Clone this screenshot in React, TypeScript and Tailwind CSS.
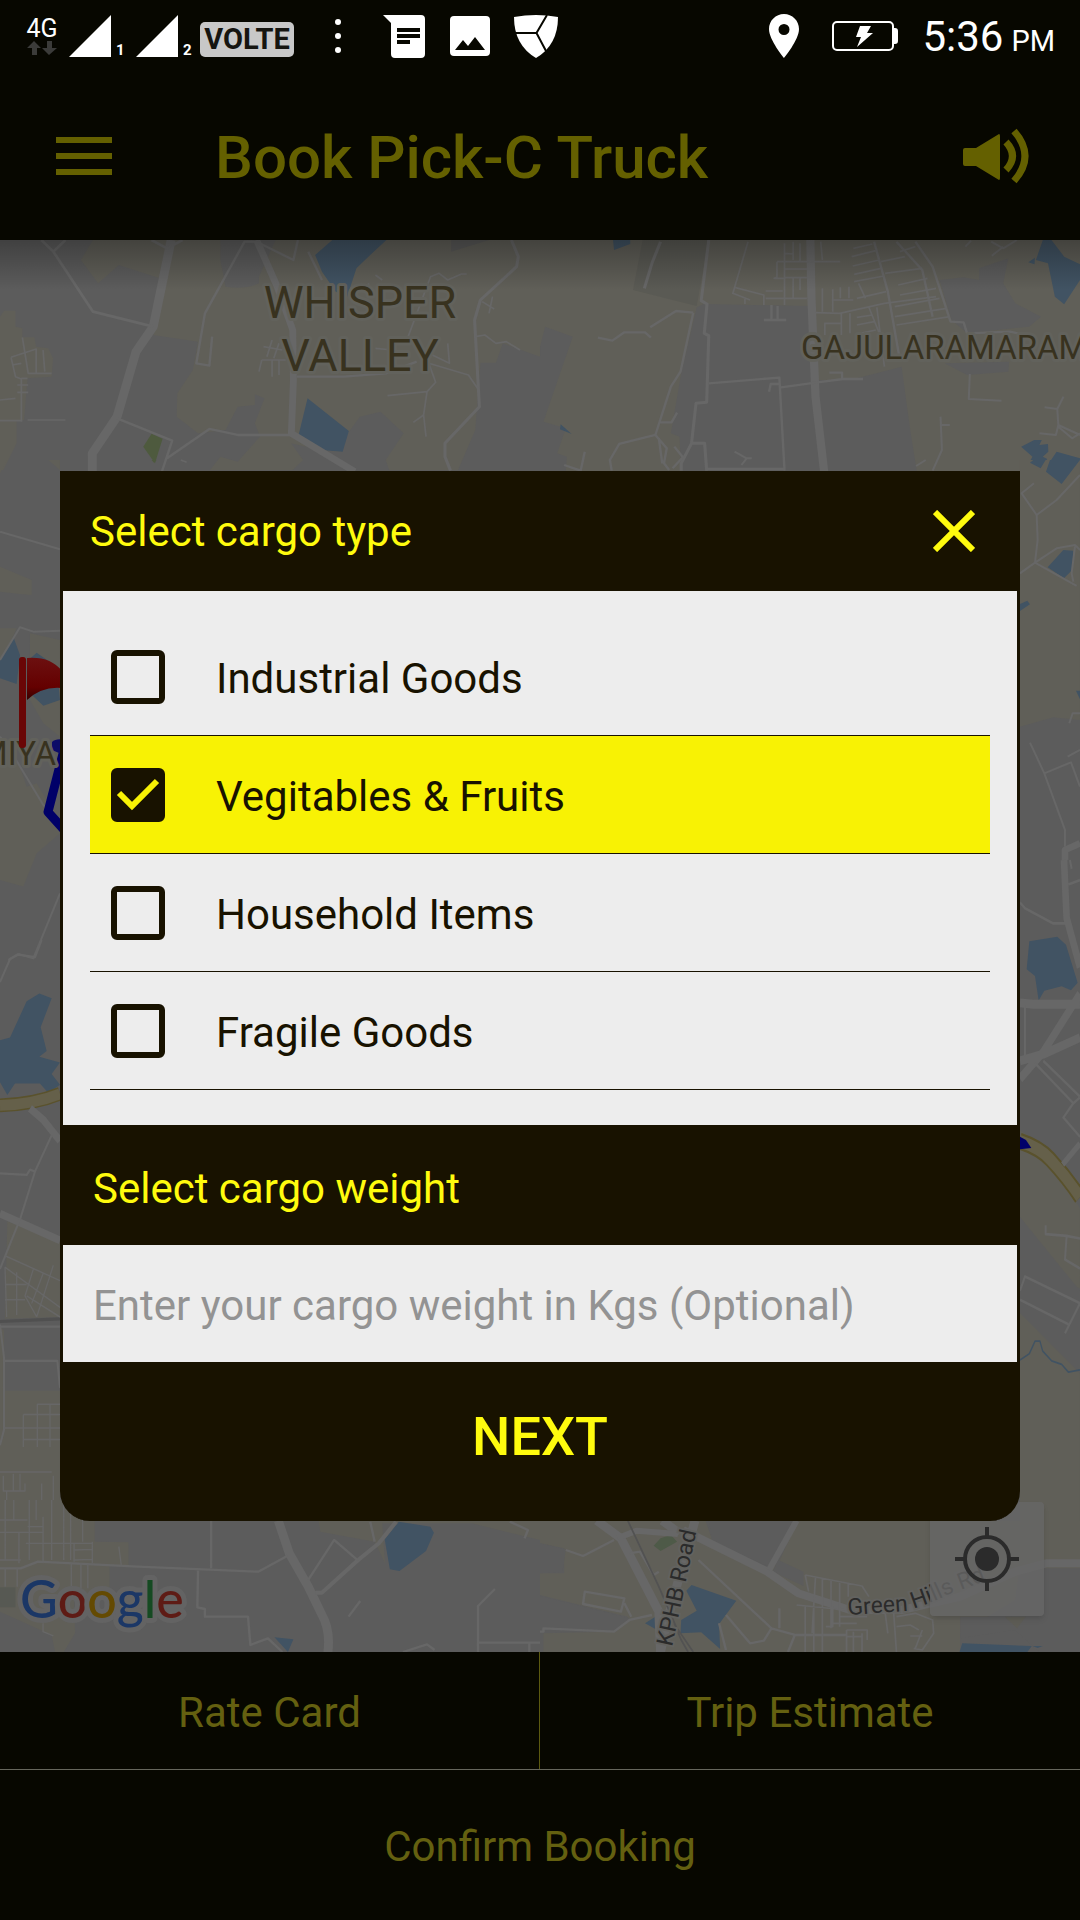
import { useState, type ReactNode } from "react";

const CARGO_TYPES = ["Industrial Goods", "Vegitables & Fruits", "Household Items", "Fragile Goods"];

const LAND = "#5c5c5c";
const URBAN = "#605f58";
const WATER = "#415363";
const ROAD = "#676767";

/* One tile of the map, drawn in its own units and placed on the canvas. */
function Tile({ x, y, sx, sy, children }: { x: number; y: number; sx: number; sy: number; children: ReactNode }) {
  return <g transform={`translate(${x} ${y}) scale(${sx} ${sy})`}>{children}</g>;
}

function Roads({ d, w = 6, color = ROAD }: { d: string; w?: number; color?: string }) {
  return <path d={d} fill="none" stroke={color} strokeWidth={w} strokeLinejoin="round" />;
}

function NorthWest() {
  return (
    <Tile x={0} y={230} sx={0.3444} sy={0.3333}>
      <path
        fill={URBAN}
        d="M270 30H640V90L655 170Q710 180 752 160V140L800 30H1568V380L1460 340L1440 398H1395L1380 600L1330 720H1130L1120 690L1172 610L1105 545L1045 560L1010 610L990 665L940 662L845 640L880 690L850 720H610L640 680L690 695L755 620L740 580L768 505L740 493V525L690 530L655 600L575 610L513 560L515 490L560 420L575 335L445 315L480 150L345 105L285 160L235 90Z"
      />
      <path fill={URBAN} d="M0 260L12 242H45V290L65 295V322H100L105 350L140 355L154 385L150 440L80 445L70 570H48V640L10 720H0Z" />
      <path fill="#595958" d="M1310 30H1420L1310 65Z" />
      <path fill={WATER} d="M965 30H1122L1075 75L1035 115L1008 200L975 185L935 125L915 75Z" />
      <path fill={WATER} d="M893 505L1013 603L995 665L940 661L867 615Z" />
      <path fill="#4e5a3e" d="M440 611L472 626L450 700L416 650Z" />
      <Roads w={26} d="M497 30L445 290L395 365L340 560L268 670V730" />
      <Roads w={20} d="M745 30L805 170L850 300L852 450L846 610L1030 725" />
      <Roads w={8} d="M120 30L155 65L270 245L445 290M155 65L190 30M440 30L485 55L530 30" />
      <Roads w={7} d="M740 35H710L595 250L570 400L608 407L616 320M745 35L852 90L865 30M895 65L935 150M340 565L500 632L470 725M485 685L608 597L690 615H845M862 440H1000L1120 430L1210 395" />
      <Roads w={9} d="M1485 30L1505 80L1500 110L1395 210L1378 270L1392 530L1292 640V680L1308 722" />
      <Roads w={5} d="M1380 320L1408 315L1440 340L1470 335L1510 360M1400 215L1435 237M1430 200L1420 250M1185 320L1250 140L1275 130L1300 150L1340 132H1355M1245 400L1360 435L1390 480M1245 400L1265 457L1240 485L1125 497M1240 485L1230 555L1237 620M1230 555L1200 577M1090 355L1140 360M1300 340L1305 400L1245 370" />
      <Roads w={5} d="M65 322L82 430H150M32 382L105 357V430M32 382L45 440L62 447V575M62 400L35 405M62 445H80M125 360L130 425M50 465H82M50 487H82M0 510L45 505M0 572H65M80 570H190M790 330L775 380M810 340L795 385M760 390H830M760 390L752 425M790 390V440M810 390V435M765 350L820 360M525 690L542 697M1090 135L1110 150M1070 160V190" />
    </Tile>
  );
}

function NorthEast() {
  return (
    <Tile x={540} y={230} sx={0.3444} sy={0.3333}>
      <path fill={URBAN} d="M0 30H1568V730H1095L1075 600L1050 410L900 450H790L780 228L475 222L455 232L410 430L380 610L405 620L410 725H75L78 680L50 670L75 595L10 575L95 320L15 290L0 350Z" />
      <path fill="#5a5a54" d="M298 30H490L455 228L270 180Z" />
      <path fill={LAND} d="M1160 150L1230 142L1275 150V115L1360 85L1345 160L1380 220L1455 260L1420 290L1240 310L1195 270ZM1175 400L1240 435L1360 425L1362 395Z" />
      <path fill={WATER} d="M212 30H262V42L215 60ZM1460 30H1485L1522 80L1568 103V150L1522 223L1495 200L1475 100L1440 90ZM1418 97L1437 83L1436 103Z" />
      <path fill={WATER} d="M60 583L92 612L58 598ZM1397 650L1435 630H1457L1450 645L1475 642L1476 665L1460 680L1473 687L1453 714L1420 698L1430 680ZM1500 665L1568 685V730L1525 750L1468 715Z" />
      <Roads w={24} d="M785 30L788 200L800 500L825 725" />
      <Roads w={9} d="M490 30L468 212L485 222L477 310L490 317L484 517L453 520L440 640L410 700V722M440 640H478L484 722M350 35L325 100L303 175" />
      <Roads w={7} d="M445 248L395 243L320 292M445 248L408 425L380 470L335 615L230 642L203 690L208 722M335 615L368 655L360 700L375 720M350 577H382L398 548M345 625L355 700M390 650L415 682L385 715M130 665L118 722L70 705M168 323L210 332L245 307H305L322 323M490 460L695 443L710 722M700 472L800 458L880 447H938M665 485L670 462H695M840 428H877V450M650 270H715M672 225V270M690 228V270M480 717H710" />
      <Roads w={5} d="M604 35L560 190L610 210M565 172L650 195V225M595 205V222M688 95H872M688 95V142L680 145H710V225M710 40V180M710 117H775M710 143H775M735 145V205M755 145V180M655 183H705M655 205H775M735 35V90M755 40V92M815 35L820 90M712 70L735 72" />
      <Roads w={7} d="M970 35L1010 185L1045 390M1035 35L1110 120L1140 260M1090 35L1140 110L1192 275L1230 277L1240 310L1365 305L1410 315" />
      <Roads w={5} d="M910 55L965 42M905 80L975 62M908 108L985 90M912 133L990 115M912 155L998 138M1045 65L1090 50M990 95L1060 80M1002 130L1110 115M1040 165L1125 145M1045 195L1150 175M1030 230L1160 205M1030 260L1180 235M1035 285L1190 260M800 248L870 250L1000 220L1150 200M920 205L1005 185M848 210H910M850 178V245M820 175V245M872 172V205M897 170V205M925 160L945 205M875 250V315M900 250V310M825 280H875M827 280V315M920 262L965 255M920 285L970 275M930 310L975 300M955 232L985 310M978 232L1000 410" />
      <Roads w={6} d="M1163 560L1167 660L1140 722M1167 585H1190M1092 708L1120 690M1248 432L1245 507L1340 512M1465 532L1502 537L1505 585L1568 615M1520 500L1502 537M1505 585L1498 615L1450 610M1505 590L1545 625L1568 610M1235 50L1252 32M1310 35L1345 55L1385 30M1345 50L1312 77M565 665L600 685L585 705M600 685H615" />
    </Tile>
  );
}

function WestSide() {
  return (
    <>
      <Tile x={0} y={460} sx={0.3333} sy={0.3333}>
        <path fill={URBAN} d="M0 0H20L0 40ZM145 0H180V30ZM0 320L95 360V405L60 402L0 395ZM0 505H50L30 550L0 600ZM90 520L180 540V830L130 790L90 720ZM0 850L60 920L80 980L110 970L140 1020L180 1080V1120L110 1180L70 1280L0 1260Z" />
        <path fill={WATER} d="M0 600L40 530L60 585L50 672L0 655ZM85 600L110 578L170 620L180 720L130 737L90 700Z" />
        <path fill="#4e5a3e" d="M455 0H470L462 8Z" />
        <Roads w={22} d="M278 0V34" />
        <Roads d="M0 215L180 268M0 600L60 502L100 515L180 512M0 830L30 870L130 1035L180 1100M180 1300L100 1495L55 1482L25 1500" />
      </Tile>
      <Tile x={0} y={940} sx={0.3333} sy={0.3827}>
        <path fill={URBAN} d="M22 735L180 790V985L15 990ZM0 1010L12 1020V1100H175L180 1178V1568H0Z" />
        <path fill={LAND} d="M12 1100H170L180 1178H12Z" />
        <path fill={WATER} d="M0 262L30 255L80 160L118 140L155 152L122 228L140 290L118 305L180 320L155 350L180 378L145 400L120 375L45 375L22 405L0 372Z" />
        <Roads w={36} color="#5a522c" d="M0 432Q100 430 180 402" />
        <Roads w={28} color="#65604a" d="M0 432Q100 430 180 402" />
        <Roads w={20} d="M90 440L130 470L180 525M0 715L180 785" />
        <Roads d="M0 110L30 50L55 38L105 45L125 0M155 510L105 605L62 725L0 860M0 610L80 614L90 600L105 605M0 1005L12 1090V1280L0 1320M12 1100H172L180 1170M180 1010H0" />
        <Roads w={8} color="#505050" d="M0 997L180 990" />
        <Roads w={4} d="M15 825L180 890M15 855L180 960M15 855L20 985M50 868V980M100 860L75 930L110 985M130 870L95 950M160 850L110 985M15 900H80M15 940H75M80 930L180 985M180 1213H112V1325M150 1213V1325M70 1240H180M70 1240V1325M12 1275H180M70 1305H180M0 1390H155M10 1400V1440H75V1420M40 1395V1440M60 1395V1440M160 1400V1470M125 1420V1568M0 1470H90M20 1440V1568M45 1470V1568M65 1470V1568M90 1465V1568M110 1465V1568M140 1465V1568M90 1470H180M80 1535H180M180 1490H130" />
      </Tile>
    </>
  );
}

function EastSide() {
  return (
    <>
      <Tile x={780} y={460} sx={0.3333} sy={0.3333}>
        <path fill={URBAN} d="M720 0H900V780L820 772L720 800Z" />
        <path fill={WATER} d="M760 0H797L782 25L750 8ZM810 0H900L845 72L798 35ZM850 270L880 272L877 330L852 355L803 322ZM720 432L742 422L750 433L720 453ZM888 692H900V718Z" />
        <Roads d="M900 45L830 120L770 165L725 100L762 70M770 165L773 240L765 308L720 340M765 308L830 265L885 255L900 270M765 308L890 378M880 365L875 340L885 260M750 848L793 940L855 1110V1160M793 940L873 907L900 980M863 890L900 870M868 790L878 760H900" />
        <Roads w={20} d="M900 1150L855 1170V1200" />
      </Tile>
      <Tile x={900} y={860} sx={0.3333} sy={0.4464}>
        <path fill={URBAN} d="M360 605L430 640L540 780V960L510 950L480 930L360 800ZM360 1015L460 1075L430 1085L360 1125V1100ZM360 1120L400 1080H470L540 1150V1568H360Z" />
        <path fill={LAND} d="M360 800L540 965V1150L360 1015Z" />
        <path fill={WATER} d="M388 182L472 172L498 190L533 275L513 292L485 283L433 293L416 315L405 260L380 245Z" />
        <Roads w={20} d="M492 0L500 130L540 240M360 320L400 323H540M360 490L430 430L540 300M360 450L430 435L540 398" />
        <Roads d="M360 95L375 108L460 142H495M375 325V440M405 455L520 545L540 532M430 450L540 530M520 545L490 577L540 620M510 0L515 20M505 55L540 45M360 965L375 933L540 993L495 1060M360 985L505 1040M437 818V838L500 842L540 848M500 842L495 895L540 915" />
        <Roads w={38} color="#5a522c" d="M360 630Q420 645 450 670Q500 710 540 755" />
        <Roads w={28} color="#65604a" d="M360 630Q420 645 450 670Q500 710 540 755" />
        <Roads w={14} d="M488 682L540 635" />
        <Roads w={4} color={WATER} d="M360 1120L388 1106L405 1078H420L428 1100L455 1122L485 1130L505 1147L540 1142" />
        <path fill="#00006a" d="M360 620L378 627L394 645L360 648Z" />
      </Tile>
    </>
  );
}

function South() {
  return (
    <>
      <Tile x={0} y={1500} sx={0.3444} sy={0.3333}>
        <path fill={URBAN} d="M0 0H275V125L373 127V195H318V262L215 300L218 400L185 456H160L150 405L0 335ZM925 60H1568V120L1370 70H1110L1118 190L1088 125L930 95Z" />
        <path fill="#575953" d="M0 262H45V322H0Z" />
        <path fill={WATER} d="M1158 65L1250 80L1260 98L1237 153L1160 213L1132 208L1117 118ZM797 412L852 418L836 456Z" />
        <Roads w={26} d="M808 62L840 160L895 260L935 345Q960 390 952 458" />
        <Roads w={12} d="M1150 65L1100 130L1040 180L935 278H915" />
        <Roads w={7} d="M0 205H60L110 185L400 200L750 215L835 167M613 62V205M575 212L573 322L595 327V350H720L727 435L778 415L820 456M895 240L970 120L1040 182M1012 350L1046 303M1437 267L1388 318V456M1390 428H1568M1537 428V456M1170 456L1240 433L1262 450M1075 65L1088 125M1480 65L1533 90L1523 115" />
        <Roads w={4} d="M0 60H80M0 97H125M15 0V180M40 0V60M55 97V190M85 0V180M105 0V60M125 50V190M80 80H125M75 130H270M150 0V180M185 0V180M205 0V180M240 0V125M215 130V185M215 150L268 148M215 180L268 178M268 125V190M345 140L352 195M0 180H60M15 205V260M50 205V260M207 190V270M235 190V265M255 190V265M125 370V395L155 408" />
      </Tile>
      <Tile x={540} y={1500} sx={0.3444} sy={0.3333}>
        <path fill={URBAN} d="M0 60H480L510 150L660 215L700 180L770 225L765 255L680 215L750 62H1568V215L1440 205L1390 225L1380 300L1220 400V456H10V400L200 395L255 365V350L0 285V220H70V145L0 130Z" />
        <path fill={LAND} d="M0 130L75 148L65 215L0 220ZM0 288L260 355L220 395L0 388ZM490 62H750L665 200L500 125ZM692 180L765 215V258L675 215ZM1440 205H1568V456H1450L1380 390L1220 415V350H1370Z" />
        <path fill="#4e5a48" d="M330 137L350 115L380 105L398 125L350 153Z" />
        <path fill={WATER} d="M440 255L570 302L520 372L523 447L468 397L408 400L410 360L455 332L425 272ZM305 370L335 350V387ZM1226 430L1428 438L1415 456H1218ZM1430 438H1460L1445 444Z" />
        <Roads w={26} d="M165 62L235 115L345 335L350 456M355 62L405 100M450 62L375 340L350 456" />
        <Roads w={24} d="M415 90L660 215L750 280L900 330H1050L1220 290L1380 215L1470 190L1568 190" />
        <Roads w={18} d="M745 62L665 210M225 115L280 92L400 102" />
        <Roads w={7} d="M75 150L125 168L215 120M460 180L672 385L650 422L610 430L540 345M672 385L740 405H890M740 405L720 456M0 395H10V385L215 395L260 360L325 345M130 275L245 295L235 335L125 312ZM245 310L265 350M260 160L290 155L330 225L345 215M520 370L540 450M695 325V385" />
        <Roads w={5} d="M770 225L935 258L955 290M770 225L780 275M800 230L790 400M820 235V400M845 240V385M870 245V380M895 250V290M745 315L890 330M770 320V456M795 320V456M820 330V456M850 320V380H830M870 350H950M850 370H920M890 390H950V420M890 410H935M890 390V456M910 395V456M935 400V456M1025 310L1035 456M1000 320L1010 400M1035 380L1075 375L1100 390M1035 350L1090 340L1140 360L1143 400L1110 450L1085 445M1075 408H1110M1110 390L1090 445" />
        <Roads w={5} color="#525252" d="M255 62L345 260L395 380L445 456M390 370L410 420L430 456" />
        <path fill="#5d5c55" d="M1350 350H1410L1385 385Z" />
      </Tile>
    </>
  );
}

function MapCanvas() {
  return (
    <svg
      className="absolute inset-0 h-full w-full"
      viewBox="0 240 1080 1412"
      preserveAspectRatio="xMidYMid slice"
      role="img"
      aria-label="Map"
      fontFamily="Roboto, sans-serif"
    >
      <defs>
        <linearGradient id="bar-shadow" x1="0" y1="0" x2="0" y2="1">
          <stop offset="0" stopColor="#000" stopOpacity="0.3" />
          <stop offset="1" stopColor="#000" stopOpacity="0" />
        </linearGradient>
        <linearGradient id="flag" x1="0" y1="0" x2="0" y2="1">
          <stop offset="0" stopColor="#6c1010" />
          <stop offset="0.7" stopColor="#640000" />
          <stop offset="1" stopColor="#350000" />
        </linearGradient>
        <path id="hills-road" d="M848 1615L905 1611Q925 1606 950 1594L1040 1560" />
      </defs>
      <rect y="240" width="1080" height="1412" fill={LAND} />
      <NorthWest />
      <NorthEast />
      <WestSide />
      <EastSide />
      <South />

      <path d="M66 742L48 812L66 832" fill="none" stroke="#000068" strokeWidth="9" strokeLinejoin="round" />
      <path d="M52 742Q56 738 66 740V756L52 750Z" fill="#0c0c68" />

      <g fill="#38321f" stroke="#62625c" strokeWidth="6" paintOrder="stroke" strokeLinejoin="round">
        <text x="360" y="318" fontSize="45" textAnchor="middle">WHISPER</text>
        <text x="360" y="371" fontSize="45" textAnchor="middle">VALLEY</text>
        <text x="801" y="359" fontSize="33">GAJULARAMARAM</text>
        <text x="56" y="765" fontSize="33" textAnchor="end">MIYA</text>
      </g>
      <g fill="#2b2b2b" stroke="#62625f" strokeWidth="4" paintOrder="stroke" fontSize="23">
        <text transform="translate(672 1647) rotate(-78)">KPHB Road</text>
        <text>
          <textPath href="#hills-road">Green Hills Rd</textPath>
        </text>
      </g>

      <rect x="19" y="657" width="7" height="91" rx="3" fill="#6a0606" />
      <path d="M27 658Q50 656 62 671V688Q42 686 27 700Z" fill="url(#flag)" />

      <text
        x="20"
        y="1618"
        fontSize="52"
        fontFamily="Lato, sans-serif"
        fontWeight="500"
        stroke="#636363"
        strokeWidth="10"
        strokeLinejoin="round"
        paintOrder="stroke"
      >
        <tspan fill="#1b3766">G</tspan>
        <tspan fill="#5e1b15">o</tspan>
        <tspan fill="#644a02">o</tspan>
        <tspan fill="#1b3766">g</tspan>
        <tspan fill="#154a22">l</tspan>
        <tspan fill="#5e1b15">e</tspan>
      </text>
      <rect y="240" width="1080" height="50" fill="url(#bar-shadow)" />
    </svg>
  );
}

function StatusBar() {
  return (
    <div className="flex h-[72px] shrink-0 items-center justify-between pr-[25px] pl-[26px] text-white">
      <div className="flex items-center">
        <div className="flex w-8 flex-col items-center">
          <span className="text-[25px] leading-6">4G</span>
          <svg className="h-[14px] w-[30px] fill-[#3b3b39]" viewBox="0 0 30 14" aria-hidden="true">
            <path d="M7 0L14 7H10V14H5V7H0ZM22 14L15 7H20V0H25V7H30Z" />
          </svg>
        </div>
        <svg className="ml-[11px] h-[42px] w-[42px] fill-white" viewBox="0 0 42 42" aria-hidden="true">
          <path d="M42 0V42H0Z" />
        </svg>
        <span className="w-[25px] self-end pl-[5px] text-[15px] leading-4 font-bold">1</span>
        <svg className="h-[42px] w-[42px] fill-white" viewBox="0 0 42 42" aria-hidden="true">
          <path d="M42 0V42H0Z" />
        </svg>
        <span className="w-[22px] self-end pl-[5px] text-[15px] leading-4 font-bold">2</span>
        <span className="mt-[6px] flex h-[35px] w-[94px] items-center justify-center rounded-[5px] bg-[#c8c8c8] text-[29px] leading-none font-bold text-[#151510]">
          VOLTE
        </span>
        <svg className="ml-[41px] h-9 w-[6px] fill-white" viewBox="0 0 6 36" aria-hidden="true">
          <circle cx="3" cy="4" r="3" />
          <circle cx="3" cy="18" r="3" />
          <circle cx="3" cy="32" r="3" />
        </svg>
        <svg className="ml-[42px] h-[43px] w-[42px]" viewBox="0 0 42 43" aria-hidden="true">
          <path fill="#fff" d="M0 0H38Q42 0 42 4V39Q42 43 38 43H12Q8 43 8 39V8Z" />
          <path fill="#070700" d="M14 13H37V17H14ZM14 19H37V23H14ZM14 25H27V29H14Z" />
        </svg>
        <svg className="ml-[25px] h-10 w-10" viewBox="0 0 40 40" aria-hidden="true">
          <rect width="40" height="40" rx="4" fill="#fff" />
          <path fill="#070700" d="M5 34L13 24L18 30L25 21L35 34Z" />
        </svg>
        <svg className="ml-6 h-[43px] w-11" viewBox="0 0 44 43" aria-hidden="true">
          <path fill="#fff" d="M0 2Q22 -2 44 2Q44 30 22 43Q0 30 0 2Z" />
          <path d="M0 18H22.500L33 0M22.500 18L32 36" fill="none" stroke="#070700" strokeWidth="2" />
        </svg>
      </div>
      <div className="flex items-center">
        <svg className="h-[44px] w-[30px]" viewBox="0 0 30 44" aria-hidden="true">
          <path
            fill="#fff"
            fillRule="evenodd"
            d="M15 0C6.700 0 0 6.700 0 15C0 26 15 44 15 44S30 26 30 15C30 6.700 23.300 0 15 0ZM15 10A5.500 5.500 0 1 1 15 21A5.500 5.500 0 1 1 15 10Z"
          />
        </svg>
        <svg className="ml-[33px] h-[30px] w-[66px]" viewBox="0 0 66 30" aria-hidden="true">
          <rect x="1" y="1" width="60" height="28" rx="4" fill="none" stroke="#fff" strokeWidth="2" />
          <path fill="#fff" d="M61 7H63Q66 7 66 10V20Q66 23 63 23H61ZM28 5H39L35 12H41L25 26L29 16H24Z" />
        </svg>
        <span className="ml-6 flex items-baseline gap-2 pt-[6px] text-[42px] leading-[48px] whitespace-nowrap">
          5:36 <span className="text-[29px]">PM</span>
        </span>
      </div>
    </div>
  );
}

function AppBar() {
  return (
    <header className="flex h-[168px] shrink-0 items-center pr-[51px] pl-[56px] text-[#646000]">
      <button type="button" aria-label="Open menu" className="flex w-14 flex-col gap-[10px]">
        <span className="h-[6px] w-full bg-current" />
        <span className="h-[6px] w-full bg-current" />
        <span className="h-[6px] w-full bg-current" />
      </button>
      <h1 className="ml-[103px] flex-1 pt-1 text-[60px] leading-[72px] font-medium whitespace-nowrap">Book Pick-C Truck</h1>
      <button type="button" aria-label="Sound">
        <svg className="h-14 w-[66px]" viewBox="0 0 66 56" aria-hidden="true">
          <path fill="currentColor" d="M2 20H13L36 6Q37 6 37 8V50Q37 52 36 52L13 38H2Q0 38 0 36V22Q0 20 2 20Z" />
          <path d="M43 14Q56 28 43 42M51 3Q73 28 51 53" fill="none" stroke="currentColor" strokeWidth="7" />
        </svg>
      </button>
    </header>
  );
}

function LocateButton() {
  return (
    <button
      type="button"
      aria-label="My location"
      className="absolute right-9 bottom-9 flex size-[114px] items-center justify-center rounded bg-[#666666]/80 text-[#2b2b2b] shadow-md"
    >
      <svg className="size-16" viewBox="0 0 64 64" fill="none" stroke="currentColor" strokeWidth="4" aria-hidden="true">
        <circle cx="32" cy="32" r="22" />
        <circle cx="32" cy="32" r="12" fill="currentColor" stroke="none" />
        <path d="M32 0V9M32 55V64M0 32H9M55 32H64" />
      </svg>
    </button>
  );
}

function CargoRow({ label, checked, onToggle }: { label: string; checked: boolean; onToggle: () => void }) {
  return (
    <li>
      <label
        className={
          checked
            ? "flex h-[118px] items-center gap-[51px] border-b border-[#181200] bg-[#f8f204] pl-[21px]"
            : "flex h-[118px] items-center gap-[51px] border-b border-[#181200] pl-[21px]"
        }
      >
        <span className="relative flex size-[54px]">
          <input
            type="checkbox"
            checked={checked}
            onChange={onToggle}
            className="size-[54px] appearance-none rounded-md border-[6px] border-[#181200] checked:bg-[#181200]"
          />
          {checked && (
            <svg className="pointer-events-none absolute inset-0 size-[54px]" viewBox="0 0 54 54" aria-hidden="true">
              <path d="M8 25L21 38L46 13" fill="none" stroke="#f8f204" strokeWidth="6" />
            </svg>
          )}
        </span>
        <span className="pt-1 text-[42px] leading-[50px]">{label}</span>
      </label>
    </li>
  );
}

function CargoDialog() {
  const [selected, setSelected] = useState<string[]>(["Vegitables & Fruits"]);
  const [weight, setWeight] = useState("");
  const toggle = (name: string) =>
    setSelected((now) => (now.includes(name) ? now.filter((n) => n !== name) : [...now, name]));

  return (
    <form
      role="dialog"
      aria-labelledby="cargo-type"
      className="w-full overflow-hidden rounded-b-[30px] border-x-[3px] border-[#181200] bg-[#181200] text-[42px] text-[#fffb0e]"
      onSubmit={(e) => e.preventDefault()}
    >
      <div className="flex h-[120px] items-center justify-between pr-[42px] pl-[27px]">
        <h2 id="cargo-type" className="pt-[2px] leading-[50px]">
          Select cargo type
        </h2>
        <button type="button" aria-label="Close">
          <svg className="size-[42px]" viewBox="0 0 42 42" aria-hidden="true">
            <path d="M2 2L40 40M40 2L2 40" stroke="currentColor" strokeWidth="6" />
          </svg>
        </button>
      </div>
      <ul className="bg-[#ededed] px-[27px] pt-[27px] pb-[35px] text-[#181200]">
        {CARGO_TYPES.map((name) => (
          <CargoRow key={name} label={name} checked={selected.includes(name)} onToggle={() => toggle(name)} />
        ))}
      </ul>
      <label htmlFor="weight" className="flex h-[120px] items-center pt-2 pl-[30px] leading-[50px]">
        Select cargo weight
      </label>
      <input
        id="weight"
        type="text"
        value={weight}
        onChange={(e) => setWeight(e.target.value)}
        placeholder="Enter your cargo weight in Kgs (Optional)"
        className="block h-[117px] w-full bg-[#ededed] px-[30px] pt-1 text-[#181200] outline-none placeholder:text-[#939393]"
      />
      <button type="submit" className="flex h-[159px] w-full items-center justify-center pb-[10px] text-[54px] font-medium">
        NEXT
      </button>
    </form>
  );
}

export default function App() {
  return (
    <div className="relative flex min-h-screen flex-col bg-[#070700] font-[Roboto,sans-serif]">
      <StatusBar />
      <AppBar />
      <main className="relative flex-1 overflow-hidden">
        <MapCanvas />
        <LocateButton />
      </main>
      <footer className="shrink-0 text-[42px] text-[#646010]">
        <div className="grid grid-cols-2 border-b border-[#66665c]">
          <button type="button" className="h-[117px] border-r border-[#5c5a10] pt-1">
            Rate Card
          </button>
          <button type="button" className="h-[117px] pt-1">
            Trip Estimate
          </button>
        </div>
        <button type="button" className="h-[150px] w-full pt-[2px]">
          Confirm Booking
        </button>
      </footer>
      <div className="absolute inset-x-0 top-[72px] bottom-0 flex items-center px-[60px]">
        <CargoDialog />
      </div>
    </div>
  );
}
